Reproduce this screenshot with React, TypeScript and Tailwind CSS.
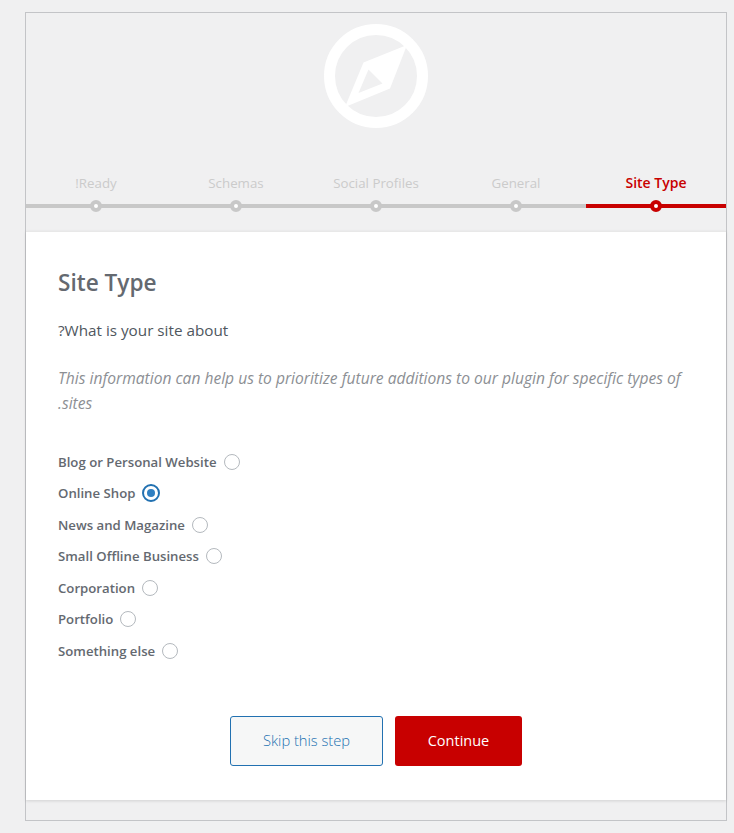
const steps = ['!Ready', 'Schemas', 'Social Profiles', 'General', 'Site Type'];

const options = [
  'Blog or Personal Website',
  'Online Shop',
  'News and Magazine',
  'Small Offline Business',
  'Corporation',
  'Portfolio',
  'Something else',
];

function Compass() {
  return (
    <svg width="106" height="106" viewBox="0 0 106 106" className="block">
      <circle cx="53" cy="53" r="46.5" fill="none" stroke="#fff" strokeWidth="11" />
      <path
        fill="#fff"
        fillRule="evenodd"
        d="M84 22 L67 65.5 L22 84 L40.5 39.5 Z M45.5 46.5 L35.5 70 L59.5 60.5 Z"
      />
    </svg>
  );
}

function Step({ label, active }: { label: string; active: boolean }) {
  return (
    <div className="flex-1">
      <div
        className={`text-center leading-[18px] ${active ? 'text-[14px] font-semibold text-[#c80000]' : 'text-[13.3px] text-[#cbcbcb]'}`}
      >
        {label}
      </div>
      <div className={`relative mt-[12px] h-1 ${active ? 'bg-[#c80000]' : 'bg-[#c8c8c8]'}`}>
        <span
          className={`absolute left-1/2 top-1/2 -translate-x-1/2 -translate-y-1/2 w-3 h-3 rounded-full border-4 bg-white ${active ? 'border-[#c80000]' : 'border-[#c8c8c8]'}`}
        />
      </div>
    </div>
  );
}

function Radio({ label, checked }: { label: string; checked: boolean }) {
  return (
    <label className="flex items-center gap-[7px] h-[31.5px]">
      <span className="text-[13.2px] font-semibold text-[#646970]">{label}</span>
      <span
        className={`relative -mt-[2px] w-4 h-4 rounded-full bg-white border ${checked ? 'w-[18px] h-[18px] border-2 border-[#2271b1]' : 'border-[#b4b9be]'}`}
      >
        {checked && (
          <span className="absolute left-1/2 top-1/2 -translate-x-1/2 -translate-y-1/2 w-2 h-2 rounded-full bg-[#2f7fc1]" />
        )}
      </span>
    </label>
  );
}

export default function App() {
  return (
    <div className="min-h-[833px] bg-[#f0f0f1] pt-3 font-['Open_Sans','Noto_Sans',sans-serif]">
      <div className="ml-[25px] w-[702px] h-[809px] border border-[#c3c4c7]">
        {/* Logo and progress */}
        <div className="h-[218px] pt-[10px]">
          <div className="flex justify-center">
            <Compass />
          </div>
          <div className="flex mt-[45px]">
            {steps.map((s, i) => (
              <Step key={s} label={s} active={i === steps.length - 1} />
            ))}
          </div>
        </div>

        {/* Card */}
        <div className="h-[569px] bg-white border-t border-[#e8e8e8] px-8 pt-[35px] shadow-[0_1px_3px_rgba(0,0,0,0.13)]">
          <h1 className="text-[22.6px] leading-[32px] font-semibold text-[#646970]">Site Type</h1>
          <p className="mt-[19px] text-[15.25px] leading-[24px] text-[#50575e]">?What is your site about</p>
          <p className="mt-[24px] text-[15.6px] leading-[25px] italic text-[#8c8f94]">
            This information can help us to prioritize future additions to our plugin for specific types of
            <br />
            .sites
          </p>
          <div className="mt-[31px] flex flex-col">
            {options.map((o) => (
              <Radio key={o} label={o} checked={o === 'Online Shop'} />
            ))}
          </div>
          <div className="mt-[48px] flex justify-center gap-3">
            <button className="w-[153px] h-[50px] rounded-[3px] border border-[#2271b1] bg-[#f6f7f7] text-[14.7px] font-light text-[#2271b1]">
              Skip this step
            </button>
            <button className="w-[127px] h-[50px] rounded-[3px] bg-[#c80000] text-[14.5px] text-white">
              Continue
            </button>
          </div>
        </div>
      </div>
    </div>
  );
}
